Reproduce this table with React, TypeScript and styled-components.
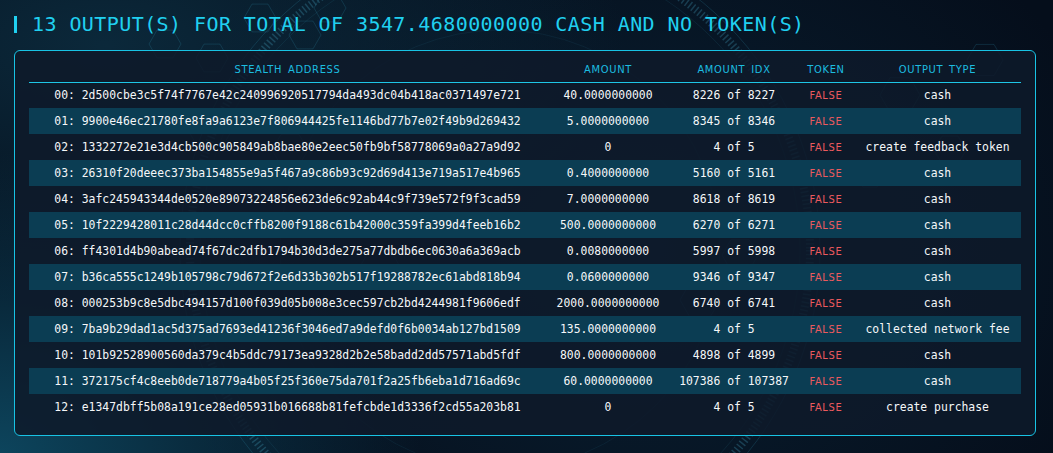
import styled, { createGlobalStyle } from 'styled-components'

const GlobalStyle = createGlobalStyle`
  html, body {
    margin: 0;
    padding: 0;
    background: #06111f;
  }
  * {
    box-sizing: border-box;
  }
`

const Page = styled.div`
  position: relative;
  width: 1053px;
  height: 453px;
  overflow: hidden;
  padding: 12px 17px 0 14px;
  background:
    radial-gradient(ellipse 420px 300px at 0% 100%, rgba(14, 78, 104, 0.85), rgba(14, 78, 104, 0) 100%),
    radial-gradient(ellipse 520px 260px at 10% 10%, rgba(16, 62, 84, 0.55), rgba(16, 62, 84, 0) 100%),
    radial-gradient(ellipse 500px 400px at 60% 55%, rgba(12, 44, 66, 0.6), rgba(12, 44, 66, 0) 100%),
    #050e1b;
`

const Decor = styled.svg`
  position: absolute;
  left: 0;
  top: 0;
  pointer-events: none;
`

const Content = styled.div`
  position: relative;
`

const Title = styled.h1`
  display: flex;
  align-items: center;
  gap: 15px;
  margin: 0 0 14px 0;
  height: 24px;
  font-family: 'DejaVu Sans Mono', monospace;
  font-weight: normal;
  font-size: 20px;
  line-height: 24px;
  letter-spacing: 0.42px;
  color: #20d0f0;
  white-space: nowrap;

  &::before {
    content: '';
    display: block;
    width: 3px;
    height: 17px;
    margin-top: 1px;
    background: #20d0f0;
  }
`

const Panel = styled.div`
  width: 1022px;
  border: 1px solid #18c3e4;
  border-radius: 6px;
  padding: 6px 14px 15px 14px;
  background: rgba(14, 26, 42, 0.86);
`

const Table = styled.table`
  width: 992px;
  border-collapse: collapse;
  table-layout: fixed;
`

const HeadCell = styled.th`
  height: 25px;
  padding: 0;
  border-bottom: 1px solid #1ec6e6;
  font-family: 'DejaVu Sans Condensed', 'DejaVu Sans', sans-serif;
  font-weight: normal;
  font-size: 11px;
  letter-spacing: 0.7px;
  word-spacing: 2px;
  color: #1cbde0;
  text-align: center;
  vertical-align: middle;
`

const Row = styled.tr<{ $striped: boolean }>`
  height: 26px;
  background: ${p => (p.$striped ? '#0b3d53' : 'transparent')};
`

const Cell = styled.td`
  padding: 0;
  font-family: 'DejaVu Sans Mono', monospace;
  font-size: 11.4px;
  color: #f5f7f9;
  text-align: center;
  vertical-align: middle;
  white-space: nowrap;
`

const FlagCell = styled(Cell)`
  font-family: 'DejaVu Sans Condensed', 'DejaVu Sans', sans-serif;
  font-size: 11px;
  letter-spacing: 0.7px;
  color: #ec5a5e;
`

type Output = {
  addr: string
  amount: string
  idx: string
  type: string
}

const outputs: Output[] = [
  { addr: '2d500cbe3c5f74f7767e42c240996920517794da493dc04b418ac0371497e721', amount: '40.0000000000', idx: '8226 of 8227', type: 'cash' },
  { addr: '9900e46ec21780fe8fa9a6123e7f806944425fe1146bd77b7e02f49b9d269432', amount: '5.0000000000', idx: '8345 of 8346', type: 'cash' },
  { addr: '1332272e21e3d4cb500c905849ab8bae80e2eec50fb9bf58778069a0a27a9d92', amount: '0', idx: '4 of 5', type: 'create feedback token' },
  { addr: '26310f20deeec373ba154855e9a5f467a9c86b93c92d69d413e719a517e4b965', amount: '0.4000000000', idx: '5160 of 5161', type: 'cash' },
  { addr: '3afc245943344de0520e89073224856e623de6c92ab44c9f739e572f9f3cad59', amount: '7.0000000000', idx: '8618 of 8619', type: 'cash' },
  { addr: '10f2229428011c28d44dcc0cffb8200f9188c61b42000c359fa399d4feeb16b2', amount: '500.0000000000', idx: '6270 of 6271', type: 'cash' },
  { addr: 'ff4301d4b90abead74f67dc2dfb1794b30d3de275a77dbdb6ec0630a6a369acb', amount: '0.0080000000', idx: '5997 of 5998', type: 'cash' },
  { addr: 'b36ca555c1249b105798c79d672f2e6d33b302b517f19288782ec61abd818b94', amount: '0.0600000000', idx: '9346 of 9347', type: 'cash' },
  { addr: '000253b9c8e5dbc494157d100f039d05b008e3cec597cb2bd4244981f9606edf', amount: '2000.0000000000', idx: '6740 of 6741', type: 'cash' },
  { addr: '7ba9b29dad1ac5d375ad7693ed41236f3046ed7a9defd0f6b0034ab127bd1509', amount: '135.0000000000', idx: '4 of 5', type: 'collected network fee' },
  { addr: '101b92528900560da379c4b5ddc79173ea9328d2b2e58badd2dd57571abd5fdf', amount: '800.0000000000', idx: '4898 of 4899', type: 'cash' },
  { addr: '372175cf4c8eeb0de718779a4b05f25f360e75da701f2a25fb6eba1d716ad69c', amount: '60.0000000000', idx: '107386 of 107387', type: 'cash' },
  { addr: 'e1347dbff5b08a191ce28ed05931b016688b81fefcbde1d3336f2cd55a203b81', amount: '0', idx: '4 of 5', type: 'create purchase' },
]

// hexagon outline centred on (cx, cy)
const hex = (cx: number, cy: number, r: number) => {
  const pts = []
  for (let i = 0; i < 6; i++) {
    const a = (Math.PI / 3) * i
    pts.push(`${(cx + r * Math.cos(a)).toFixed(1)},${(cy + r * Math.sin(a)).toFixed(1)}`)
  }
  return pts.join(' ')
}

const hexes: [number, number, number][] = [
  [165, 44, 16], [212, 58, 16], [260, 18, 16], [330, 8, 16], [305, 35, 16],
  [210, 130, 22], [290, 150, 18], [380, 270, 22], [700, 300, 20], [740, 255, 18],
  [900, 95, 20], [950, 150, 16], [985, 60, 18], [420, 330, 16], [870, 175, 14],
]

const HudBackground = () => (
  <Decor width={1053} height={453} viewBox="0 0 1053 453">
    <g fill="none" stroke="#3aa7c8" strokeOpacity={0.18} strokeWidth={1}>
      <circle cx={500} cy={250} r={320} />
      <circle cx={500} cy={250} r={300} strokeOpacity={0.1} />
      <circle cx={500} cy={250} r={220} strokeOpacity={0.08} />
      {hexes.map(([x, y, r], i) => (
        <polygon key={i} points={hex(x, y, r)} />
      ))}
    </g>
    <circle cx={500} cy={250} r={310} fill="none" stroke="#4fb9d8" strokeOpacity={0.25} strokeWidth={8} strokeDasharray="1.5 2.5" />
  </Decor>
)

const App = () => {
  return (
    <>
      <GlobalStyle />
      <Page>
        <HudBackground />
        <Content>
          <Title>13 OUTPUT(S) FOR TOTAL OF 3547.4680000000 CASH AND NO TOKEN(S)</Title>
          <Panel>
            <Table>
              <colgroup>
                <col style={{ width: 517 }} />
                <col style={{ width: 124 }} />
                <col style={{ width: 128 }} />
                <col style={{ width: 56 }} />
                <col style={{ width: 167 }} />
              </colgroup>
              <thead>
                <tr>
                  <HeadCell>STEALTH ADDRESS</HeadCell>
                  <HeadCell>AMOUNT</HeadCell>
                  <HeadCell>AMOUNT IDX</HeadCell>
                  <HeadCell>TOKEN</HeadCell>
                  <HeadCell>OUTPUT TYPE</HeadCell>
                </tr>
              </thead>
              <tbody>
                {outputs.map((o, i) => (
                  <Row key={i} $striped={i % 2 === 1}>
                    <Cell>{String(i).padStart(2, '0')}: {o.addr}</Cell>
                    <Cell>{o.amount}</Cell>
                    <Cell>{o.idx}</Cell>
                    <FlagCell>FALSE</FlagCell>
                    <Cell>{o.type}</Cell>
                  </Row>
                ))}
              </tbody>
            </Table>
          </Panel>
        </Content>
      </Page>
    </>
  )
}

export default App
